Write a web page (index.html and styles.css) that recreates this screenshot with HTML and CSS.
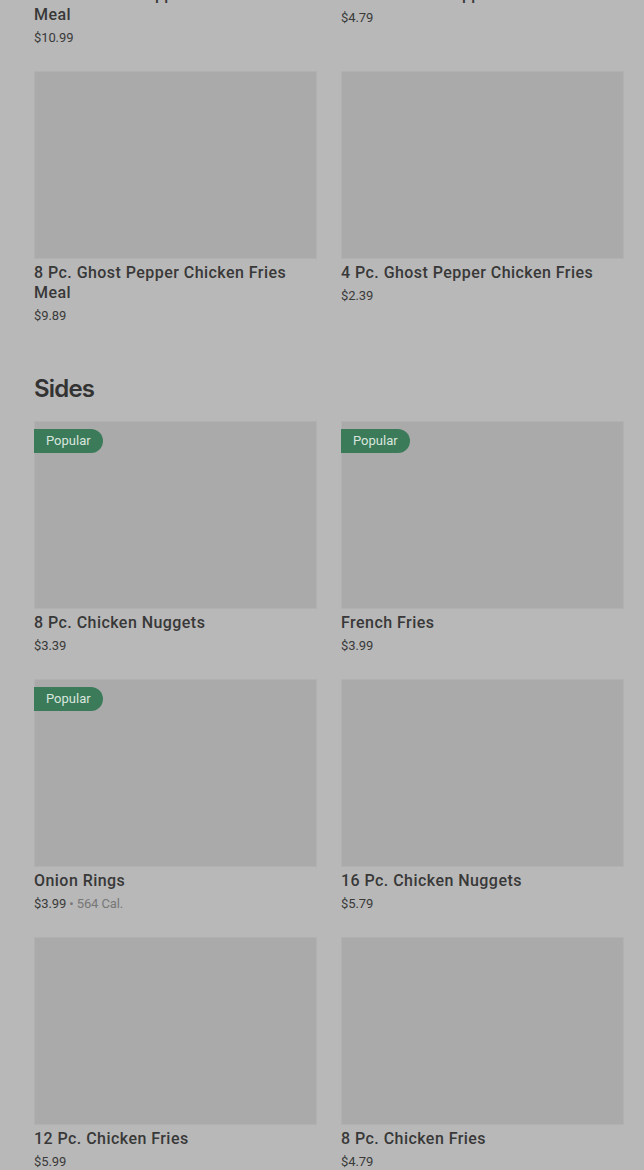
FILE: index.html
```html
<!DOCTYPE html>
<html lang="en">
<head>
<meta charset="utf-8">
<title>Menu</title>
<link rel="stylesheet" href="styles.css">
</head>
<body>
<main class="page">
  <section class="section section-first">
    <div class="grid">
      <article class="card">
        <div class="thumb"></div>
        <h3 class="title">16 Pc. Ghost Pepper Chicken Fries Meal</h3>
        <p class="price">$10.99</p>
      </article>
      <article class="card">
        <div class="thumb"></div>
        <h3 class="title">12 Pc. Ghost Pepper Fries</h3>
        <p class="price">$4.79</p>
      </article>
      <article class="card">
        <div class="thumb"></div>
        <h3 class="title">8 Pc. Ghost Pepper Chicken Fries Meal</h3>
        <p class="price">$9.89</p>
      </article>
      <article class="card">
        <div class="thumb"></div>
        <h3 class="title">4 Pc. Ghost Pepper Chicken Fries</h3>
        <p class="price">$2.39</p>
      </article>
    </div>
  </section>

  <section class="section">
    <h2 class="section-title">Sides</h2>
    <div class="grid">
      <article class="card">
        <div class="thumb"><span class="badge">Popular</span></div>
        <h3 class="title">8 Pc. Chicken Nuggets</h3>
        <p class="price">$3.39</p>
      </article>
      <article class="card">
        <div class="thumb"><span class="badge">Popular</span></div>
        <h3 class="title">French Fries</h3>
        <p class="price">$3.99</p>
      </article>
      <article class="card">
        <div class="thumb"><span class="badge">Popular</span></div>
        <h3 class="title">Onion Rings</h3>
        <p class="price">$3.99 <span class="cal">• 564 Cal.</span></p>
      </article>
      <article class="card">
        <div class="thumb"></div>
        <h3 class="title">16 Pc. Chicken Nuggets</h3>
        <p class="price">$5.79</p>
      </article>
      <article class="card">
        <div class="thumb"></div>
        <h3 class="title">12 Pc. Chicken Fries</h3>
        <p class="price">$5.99</p>
      </article>
      <article class="card">
        <div class="thumb"></div>
        <h3 class="title">8 Pc. Chicken Fries</h3>
        <p class="price">$4.79</p>
      </article>
    </div>
  </section>
</main>
</body>
</html>
```

FILE: styles.css
```css
html, body {
  margin: 0;
  padding: 0;
  background: #b8b8b8;
}

body {
  font-family: Roboto, "Liberation Sans", Arial, sans-serif;
  color: #333333;
  overflow: hidden;
}

.page {
  padding: 0 20px 0 34px;
  margin-top: -207px;
}

.grid {
  display: grid;
  grid-template-columns: 1fr 1fr;
  column-gap: 24px;
  row-gap: 24px;
  align-items: start;
}

.card {
  margin: 0;
}

.thumb {
  position: relative;
  height: 188px;
  background: #aaaaaa;
  box-shadow: inset 1px 1px 0 #b1b1b1, inset -1px -1px 0 #b1b1b1;
}

.badge {
  position: absolute;
  left: 0;
  top: 8px;
  height: 24px;
  line-height: 24px;
  padding: 0 12px;
  background: #3b7b5a;
  color: #d9e6de;
  font-size: 13px;
  border-radius: 0 12px 12px 0;
}

.title {
  margin: 4px 0 0;
  font-size: 16px;
  line-height: 20px;
  font-weight: 500;
  letter-spacing: 0.45px;
  color: #383838;
}

.price {
  margin: 4px 0 0;
  font-size: 13px;
  line-height: 18px;
  color: #3a3a3a;
  letter-spacing: -0.1px;
}

.cal {
  color: #777777;
}

.section-title {
  margin: 48px 0 16px;
  font-family: Inter, "Noto Sans", sans-serif;
  font-size: 24px;
  line-height: 32px;
  font-weight: 600;
  color: #333333;
  letter-spacing: -0.8px;
}
```
